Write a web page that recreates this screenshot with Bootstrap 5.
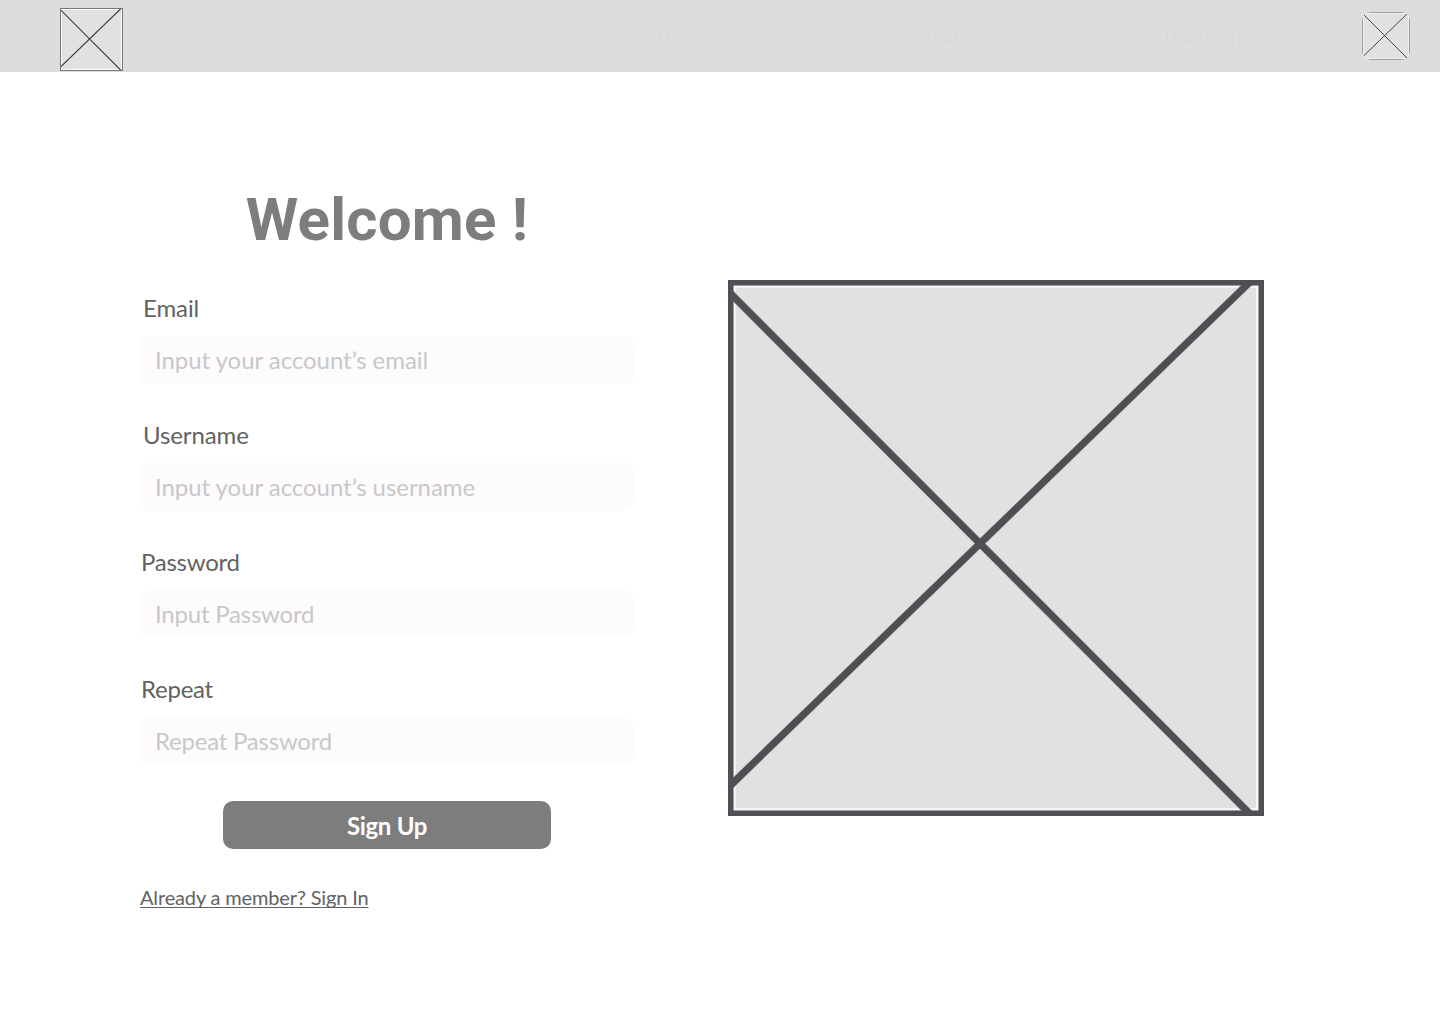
<!DOCTYPE html>
<html lang="en">
<head>
<meta charset="utf-8">
<meta name="viewport" content="width=device-width, initial-scale=1">
<title>Sign Up</title>
<link href="https://cdn.jsdelivr.net/npm/bootstrap@5.3.0/dist/css/bootstrap.min.css" rel="stylesheet">
<style>
body{font-family:Lato,"Noto Sans",sans-serif;color:#626262;background:#fff;font-size:24px}
.topbar{height:72px;background:#ddd;padding:0 30px 0 60px}
.topbar .logo{margin-top:8px}
.topbar .avatar{margin-top:12px;border-radius:9px}
.topbar .links{margin-left:534px;width:705px;padding-top:22px}
.topbar .nav-link{font:300 20px/30px Roboto,sans-serif;color:#d9d9d9;letter-spacing:-.1px;padding:0;white-space:nowrap}
.nav-dash{width:269px}
.nav-plans{width:235px}
.signup{padding:115px 0 0 140px;gap:94px}
.form-col{width:494px}
.welcome{font:700 60px/66px Roboto,sans-serif;color:#7d7d7d;letter-spacing:.2px;margin:0 0 37px}
.field{margin-bottom:33px}
.form-label{line-height:36px;height:36px;margin:0 0 10px;padding-left:1px;display:block;letter-spacing:-.25px}
.label-in{padding-left:3px;letter-spacing:-.1px}
.form-control{height:48px;border:0;border-radius:10px;background:#fdfbfc;padding:0 15px;font-size:24px;line-height:48px;letter-spacing:-.05px}
.form-control::placeholder{color:#c8c8c8;opacity:1}
.form-control[type=password]{letter-spacing:-.22px}
.btn-sign{width:328px;height:48px;border-radius:10px;background:#7d7d7d;color:#fff;font-weight:700;font-size:24px;line-height:50px;letter-spacing:-.3px;padding:0;border:0;margin-top:2px}
.member{color:#626262;font-size:20px;line-height:30px;letter-spacing:-.15px;text-underline-offset:2px;text-decoration-thickness:1px;text-decoration-skip-ink:none;margin-top:33px}
.btn-sign{margin-top:3px}
.hero{margin-top:93px}
</style>
</head>
<body>
<nav class="topbar d-flex align-items-start">
  <svg class="logo flex-shrink-0" width="63" height="63" viewBox="0 0 63 63">
    <rect width="63" height="63" fill="#e1e1e1"/>
    <rect x="1.5" y="1.5" width="60" height="60" fill="none" stroke="#fafafa"/>
    <path d="M0 1.300 61.500 63M0 59.500 61.500 0" stroke="#3c3c41" stroke-width="1.100" fill="none"/>
    <rect x=".5" y=".5" width="62" height="62" fill="none" stroke="#78787c"/>
  </svg>
  <div class="links d-flex flex-shrink-0">
    <a class="nav-link nav-dash" href="#">Dashbord</a>
    <a class="nav-link nav-plans" href="#">Plans</a>
    <a class="nav-link" href="#">Trashcan</a>
  </div>
  <svg class="avatar flex-shrink-0" width="48" height="48" viewBox="0 0 48 48">
    <rect width="48" height="48" fill="#e1e1e1"/>
    <rect x="1.5" y="1.5" width="45" height="45" fill="none" stroke="#f1f1f1"/>
    <path d="M0 1 47 48M0 45.500 47 0" stroke="#434348" stroke-width="1" fill="none"/>
    <rect x=".4" y=".4" width="47.200" height="47.200" fill="none" stroke="#8b8b8d" stroke-width=".8"/>
  </svg>
</nav>
<main class="signup d-flex align-items-start">
  <form class="form-col d-flex flex-column">
    <h1 class="welcome text-center">Welcome !</h1>
    <div class="field"><label class="form-label label-in" for="email">Email</label><input class="form-control" id="email" type="email" placeholder="Input your account’s email"></div>
    <div class="field"><label class="form-label label-in" for="user">Username</label><input class="form-control" id="user" type="text" placeholder="Input your account’s username"></div>
    <div class="field"><label class="form-label" for="pass">Password</label><input class="form-control" id="pass" type="password" placeholder="Input Password"></div>
    <div class="field"><label class="form-label" for="rep">Repeat</label><input class="form-control" id="rep" type="password" placeholder="Repeat Password"></div>
    <button class="btn btn-sign align-self-center" type="button">Sign Up</button>
    <a class="member align-self-start" href="#">Already a member? Sign In</a>
  </form>
  <svg class="hero flex-shrink-0" width="536" height="536" viewBox="0 0 536 536">
    <rect width="536" height="536" fill="#e1e1e1"/>
    <rect x="6.500" y="6.500" width="523" height="523" fill="none" stroke="#f8f8f8" stroke-width="2.500"/>
    <path d="M0 11 525 537M0 507.800 524 0" stroke="#d6d6d7" stroke-width="9" fill="none"/>
    <path d="M0 11 525 537M0 507.800 524 0" stroke="#4f4f53" stroke-width="7.200" fill="none"/>
    <rect x="2.750" y="2.750" width="530.500" height="530.500" fill="none" stroke="#4f4f55" stroke-width="5.500"/>
  </svg>
</main>
<script src="https://cdn.jsdelivr.net/npm/bootstrap@5.3.0/dist/js/bootstrap.bundle.min.js"></script>
</body>
</html>
